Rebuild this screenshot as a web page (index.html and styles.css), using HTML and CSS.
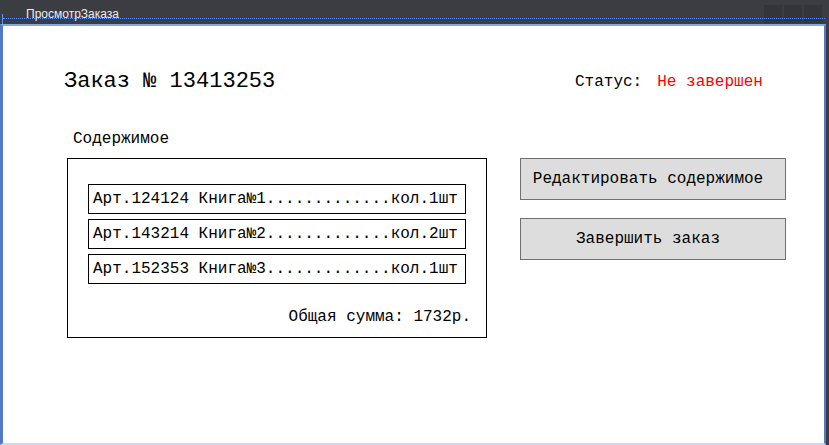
FILE: index.html
```html
<!DOCTYPE html>
<html lang="ru">
<head>
<meta charset="utf-8">
<title>ПросмотрЗаказа</title>
<link rel="stylesheet" href="styles.css">
</head>
<body>
<div class="window">
  <div class="titlebar">
    <span class="title">ПросмотрЗаказа</span>
    <div class="winbtns">
      <span class="winbtn"></span>
      <span class="winbtn"></span>
      <span class="winbtn"></span>
    </div>
  </div>
  <div class="frame">
    <div class="content">
      <div class="header">
        <div class="order-title">Заказ № 13413253</div>
        <div class="status">Статус:<span class="status-value">Не завершен</span></div>
      </div>
      <div class="section-label">Содержимое</div>
      <div class="main-row">
        <div class="panel">
          <div class="items">
            <div class="item">Арт.124124 Книга№1.............кол.1шт</div>
            <div class="item">Арт.143214 Книга№2.............кол.2шт</div>
            <div class="item">Арт.152353 Книга№3.............кол.1шт</div>
          </div>
          <div class="total">Общая сумма: 1732р.</div>
        </div>
        <div class="actions">
          <div class="btn">Редактировать содержимое</div>
          <div class="btn">Завершить заказ</div>
        </div>
      </div>
    </div>
  </div>
</div>
</body>
</html>
```
FILE: styles.css
```css
html, body {
  margin: 0;
  padding: 0;
}
body {
  width: 829px;
  height: 445px;
  overflow: hidden;
  background: #3c3d42;
}
.window {
  display: flex;
  flex-direction: column;
  height: 445px;
}
.titlebar {
  position: relative;
  height: 24px;
  display: flex;
  align-items: flex-start;
  flex: 0 0 24px;
}
.titlebar::after {
  content: "";
  position: absolute;
  left: 3px;
  right: 4px;
  top: 18px;
  border-top: 1px dotted #5a96ff;
}
.titlebar::before {
  content: "";
  position: absolute;
  left: 2px;
  top: 14px;
  width: 1px;
  height: 10px;
  background: #5a96ff;
}
.title {
  padding-left: 26px;
  padding-top: 8px;
  font-family: "Liberation Sans", Arial, sans-serif;
  font-size: 12px;
  line-height: 13px;
  color: #ececec;
  position: relative;
  z-index: 1;
}
.winbtns {
  margin-left: auto;
  margin-right: 7px;
  padding-top: 5px;
  display: flex;
  gap: 2px;
}
.winbtn {
  width: 18px;
  height: 18px;
  background: #34353a;
}
.frame {
  flex: 1;
  margin-right: 3px;
  background: #ffffff;
  border-left: 3px solid #5577c8;
  border-right: 2px solid #5577c8;
  border-top: 2px solid #86a6e6;
  border-bottom: 2px solid #c9d9f7;
  box-sizing: border-box;
}
.content {
  padding: 43px 0 0 61px;
  font-family: "Liberation Mono", "Courier New", monospace;
  color: #000;
}
.header {
  display: flex;
  align-items: flex-start;
}
.order-title {
  flex: 0 0 511px;
  font-size: 22px;
  line-height: 26px;
}
.status {
  font-size: 16px;
  line-height: 26px;
}
.status-value {
  color: #ff0000;
  margin-left: 15px;
}
.section-label {
  margin-top: 34px;
  margin-left: 9px;
  font-size: 16px;
  line-height: 20px;
}
.main-row {
  margin-top: 9px;
  display: flex;
  align-items: flex-start;
}
.panel {
  margin-left: 3px;
  width: 420px;
  height: 180px;
  box-sizing: border-box;
  border: 1px solid #000;
  padding: 25px 0 0 20px;
}
.items {
  display: flex;
  flex-direction: column;
  gap: 5px;
}
.item {
  width: 378px;
  height: 30px;
  box-sizing: border-box;
  border: 1px solid #000;
  padding-left: 4px;
  font-size: 16px;
  line-height: 28px;
  white-space: pre;
}
.total {
  margin-top: 23px;
  padding-right: 15px;
  text-align: right;
  font-size: 16px;
  line-height: 20px;
}
.actions {
  margin-left: 33px;
  display: flex;
  flex-direction: column;
  gap: 18px;
}
.btn {
  width: 266px;
  height: 42px;
  box-sizing: border-box;
  border: 1px solid #707070;
  background: #dddddd;
  padding: 1px 10px 0 0;
  text-align: center;
  font-size: 16px;
  line-height: 39px;
  white-space: pre;
}
```
